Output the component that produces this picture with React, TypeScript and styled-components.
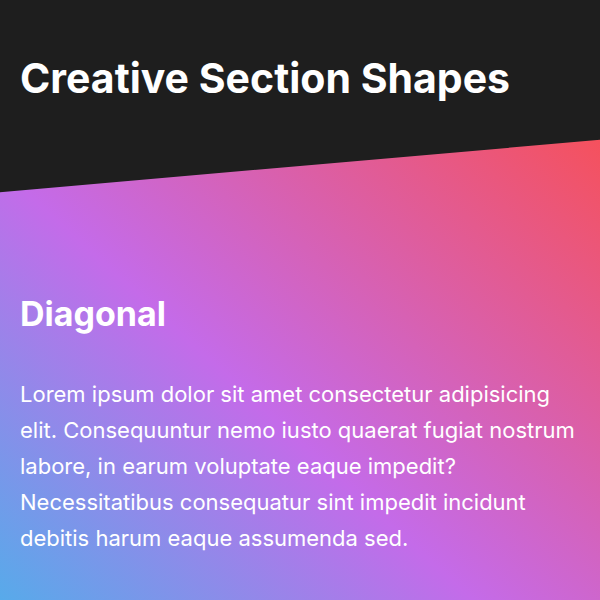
import React from "react";
import styled, { createGlobalStyle } from "styled-components";

const Global = createGlobalStyle`
  * { box-sizing: border-box; }
  html, body { margin: 0; padding: 0; }
  body {
    background: #1e1e1e;
    color: #fff;
    font-family: Inter, "Noto Sans", sans-serif;
    overflow: hidden;
  }
`;

const Header = styled.header`
  padding: 54px 20px 0;
  height: 166px;
`;

const Title = styled.h1`
  margin: 0;
  font-size: 41px;
  font-weight: 700;
  line-height: 1.2;
`;

const Section = styled.section`
  position: relative;
  isolation: isolate;
  padding: 128px 20px 0;
  height: 600px;

  &::before {
    content: "";
    position: absolute;
    inset: 0;
    z-index: -1;
    background-image: linear-gradient(45deg, #45b5ea 10%, #c46be9 52%, #f5515d 100%);
    transform: skewY(-5deg);
  }
`;

const Heading = styled.h2`
  margin: 0 0 41px;
  font-size: 34px;
  font-weight: 700;
  line-height: 1.2;
`;

const Text = styled.p`
  margin: 0;
  font-size: 22px;
  line-height: 36px;
`;

export default function App() {
  return (
    <>
      <Global />
      <Header>
        <Title>Creative Section Shapes</Title>
      </Header>
      <Section>
        <Heading>Diagonal</Heading>
        <Text>
          Lorem ipsum dolor sit amet consectetur adipisicing elit. Consequuntur
          nemo iusto quaerat fugiat nostrum labore, in earum voluptate eaque
          impedit? Necessitatibus consequatur sint impedit incidunt debitis
          harum eaque assumenda sed.
        </Text>
      </Section>
    </>
  );
}
